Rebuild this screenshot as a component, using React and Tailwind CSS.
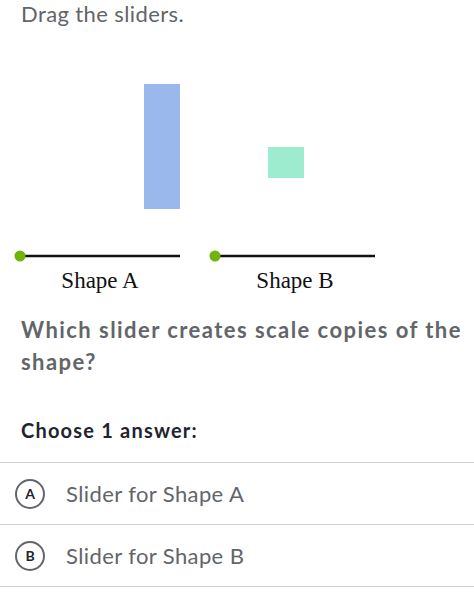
import React from 'react';

const options = [
    { letter: 'A', label: 'Slider for Shape A' },
    { letter: 'B', label: 'Slider for Shape B' },
];

const Graph = () => (
    <svg width="474" height="272" viewBox="0 0 474 272" className="block">
        <rect x="144" y="56" width="36" height="125" fill="#9ab8ec" />
        <rect x="268" y="119" width="36" height="31" fill="#9eeccf" />

        <line x1="20" y1="228" x2="180" y2="228" stroke="#111" strokeWidth="2.5" />
        <circle cx="20" cy="228" r="5.5" fill="#71b307" />
        <text x="100" y="260" textAnchor="middle" fontSize="23" fill="#111" fontFamily="'Liberation Serif', serif">
            Shape A
        </text>

        <line x1="215" y1="228" x2="375" y2="228" stroke="#111" strokeWidth="2.5" />
        <circle cx="215" cy="228" r="5.5" fill="#71b307" />
        <text x="295" y="260" textAnchor="middle" fontSize="23" fill="#111" fontFamily="'Liberation Serif', serif">
            Shape B
        </text>
    </svg>
);

const App = () => {
    return (
        <div className="w-[474px] h-[599px] bg-white overflow-hidden font-['Lato',sans-serif]">
            <p className="pl-[21px] text-[22px] leading-[28px] tracking-[0.4px] text-[#626569]">Drag the sliders.</p>

            <Graph />

            <p className="mt-[14px] pl-[21px] pr-[6px] text-[22px] leading-[32px] tracking-[1.45px] font-bold text-[#626569]">
                Which slider creates scale copies of the shape?
            </p>

            <p className="mt-[38px] px-[21px] text-[20px] leading-[28px] tracking-[1.2px] font-bold text-[#21242c]">
                Choose 1 answer:
            </p>

            <div className="mt-[18px] border-b border-[#cfd0d2]">
                {options.map((opt) => (
                    <div key={opt.letter} className="flex items-center h-[62px] border-t border-[#cfd0d2] pl-[15px]">
                        <div className="w-[30px] h-[30px] rounded-full border-2 border-[#626569] flex items-center justify-center text-[14px] font-bold text-[#21242c]">
                            {opt.letter}
                        </div>
                        <span className="ml-[21px] text-[22px] tracking-[0.4px] text-[#626569]">{opt.label}</span>
                    </div>
                ))}
            </div>
        </div>
    );
};

export default App;
